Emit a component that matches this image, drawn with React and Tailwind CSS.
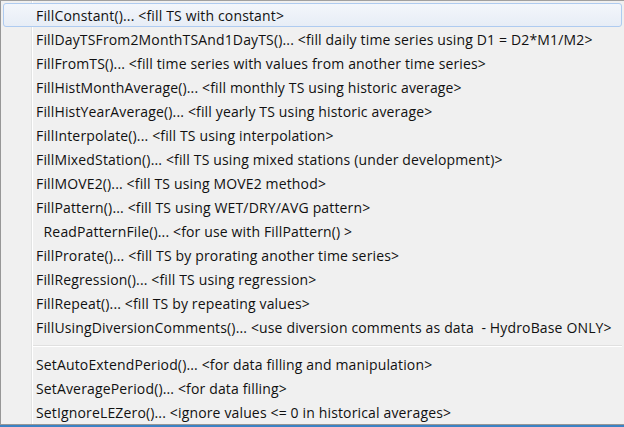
import React from 'react';

const fillItems = [
  'FillConstant()... <fill TS with constant>',
  'FillDayTSFrom2MonthTSAnd1DayTS()... <fill daily time series using D1 = D2*M1/M2>',
  'FillFromTS()... <fill time series with values from another time series>',
  'FillHistMonthAverage()... <fill monthly TS using historic average>',
  'FillHistYearAverage()... <fill yearly TS using historic average>',
  'FillInterpolate()... <fill TS using interpolation>',
  'FillMixedStation()... <fill TS using mixed stations (under development)>',
  'FillMOVE2()... <fill TS using MOVE2 method>',
  'FillPattern()... <fill TS using WET/DRY/AVG pattern>',
  '  ReadPatternFile()... <for use with FillPattern() >',
  'FillProrate()... <fill TS by prorating another time series>',
  'FillRegression()... <fill TS using regression>',
  'FillRepeat()... <fill TS by repeating values>',
  'FillUsingDiversionComments()... <use diversion comments as data  - HydroBase ONLY>',
];

const setItems = [
  'SetAutoExtendPeriod()... <for data filling and manipulation>',
  'SetAveragePeriod()... <for data filling>',
  'SetIgnoreLEZero()... <ignore values <= 0 in historical averages>',
];

function MenuItem({ label, active }) {
  return (
    <div
      className={`relative z-10 h-[24px] flex items-center pl-[32px] pr-4 rounded-[3px] border whitespace-pre ${
        active
          ? 'border-[#aecbf0] bg-gradient-to-b from-[#f3f6fb] to-[#e7edf6]'
          : 'border-transparent'
      }`}
    >
      {label}
    </div>
  );
}

export default function App() {
  return (
    <div
      className="w-[624px] h-[427px] flex flex-col bg-[#f0f0f0] text-[14px] tracking-[0.15px] text-[#111] overflow-hidden"
      style={{ fontFamily: '"Open Sans", "Noto Sans", sans-serif' }}
    >
      <div className="relative flex-1 border-l border-t border-b border-l-[#979797] border-t-[#a0a0a0] border-b-[#979797] pt-[2px] px-[2px]">
        {/* gutter line */}
        <div className="absolute left-[30px] top-0 bottom-0 w-[2px] border-l border-l-[#e2e3e3] border-r border-r-white" />

        {fillItems.map((label, i) => (
          <MenuItem key={label} label={label} active={i === 0} />
        ))}

        <div className="relative z-10 h-[13px] flex items-center pl-[30px]">
          <div className="w-full h-[2px] border-t border-t-[#e0e0e0] border-b border-b-white" />
        </div>

        {setItems.map((label) => (
          <MenuItem key={label} label={label} />
        ))}
      </div>
      <div className="h-[2px] bg-[#3b82c4]" />
    </div>
  );
}
